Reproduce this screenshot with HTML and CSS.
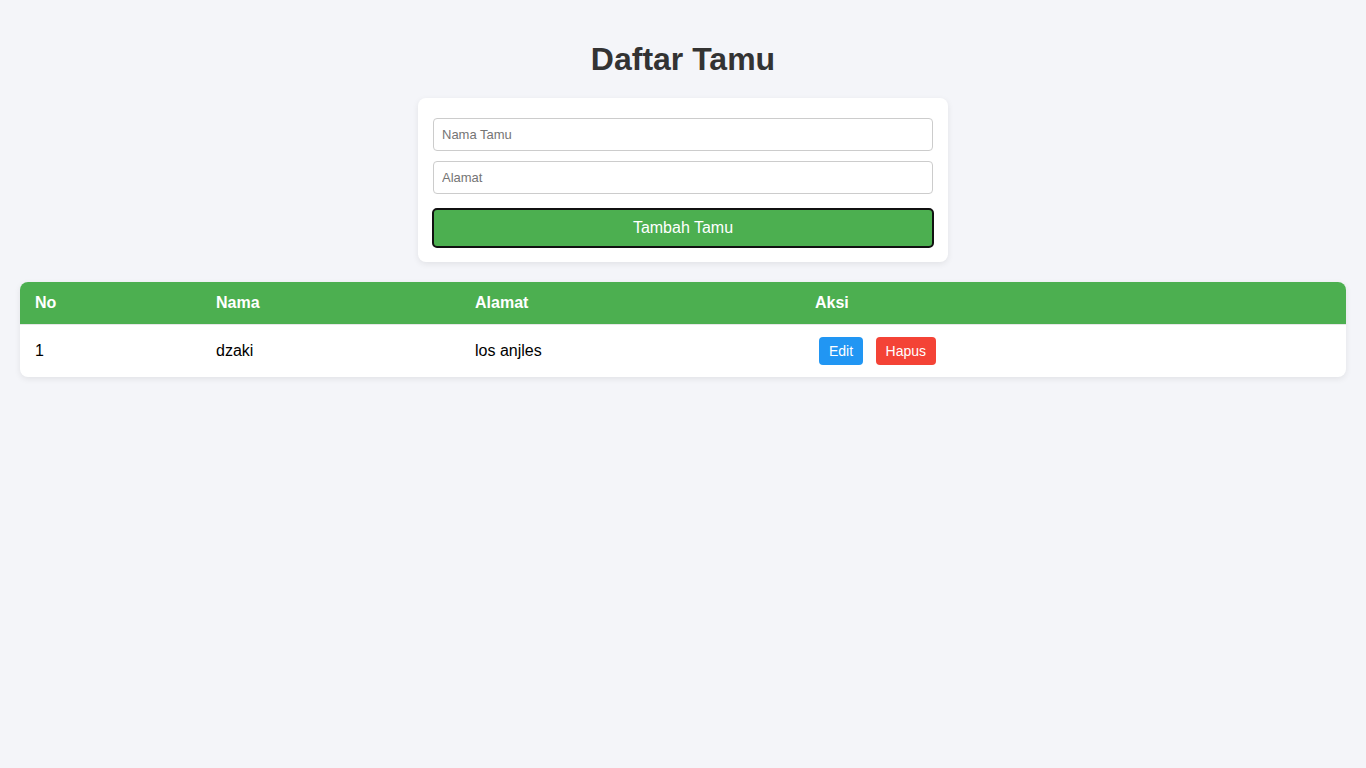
FILE: index.html
```html
<!DOCTYPE html>
<html>

<head>
    <title>Daftar Tamu</title>
    <link rel="stylesheet" href="styles.css">
</head>

<body>

    <h1>Daftar Tamu</h1>

    <form class="guest-form">
        <input type="text" id="nama" name="nama" placeholder="Nama Tamu">
        <input type="text" id="alamat" name="alamat" placeholder="Alamat">
        <button type="submit" class="btn-add">Tambah Tamu</button>
    </form>

    <table class="guest-table">
        <thead>
            <tr>
                <th class="col-no">No</th>
                <th class="col-nama">Nama</th>
                <th class="col-alamat">Alamat</th>
                <th>Aksi</th>
            </tr>
        </thead>
        <tbody>
            <tr>
                <td>1</td>
                <td>dzaki</td>
                <td>los anjles</td>
                <td>
                    <button class="btn-edit">Edit</button>
                    <button class="btn-delete">Hapus</button>
                </td>
            </tr>
        </tbody>
    </table>

</body>

</html>
```

FILE: styles.css
```css
body {
    font-family: "Liberation Sans", Arial, sans-serif;
    background-color: #f4f5f9;
    margin: 0;
    padding: 20px;
}

h1 {
    text-align: center;
    color: #333;
    font-size: 32px;
    margin: 21px 0 20px;
}

.guest-form {
    display: flex;
    flex-direction: column;
    gap: 10px;
    background: #fff;
    max-width: 500px;
    margin: 0 auto 20px;
    padding: 20px 15px 14px;
    border-radius: 8px;
    box-shadow: 0 2px 6px rgba(0, 0, 0, 0.08);
}

.guest-form input {
    width: 100%;
    box-sizing: border-box;
    margin: 0;
    padding: 8px;
    font-family: inherit;
    font-size: 13px;
    border: 1px solid #ccc;
    border-radius: 4px;
}

.guest-form input::placeholder {
    color: #757575;
}

.btn-add {
    width: calc(100% + 2px);
    margin: 4px -1px 0;
    height: 40px;
    box-sizing: border-box;
    background-color: #4caf50;
    color: #fff;
    font-family: inherit;
    font-size: 16px;
    border: 2px solid #111;
    border-radius: 5px;
}

.guest-table {
    width: 100%;
    border-collapse: collapse;
    background: #fff;
    border-radius: 8px;
    overflow: hidden;
    box-shadow: 0 2px 6px rgba(0, 0, 0, 0.08);
}

.guest-table th,
.guest-table td {
    padding: 12px 15px;
    text-align: left;
    font-size: 16px;
}

.guest-table th {
    background-color: #4caf50;
    color: #fff;
}

.guest-table td {
    border-top: 1px solid #e6e6e6;
}

.col-no {
    width: 151px;
}

.col-nama {
    width: 229px;
}

.col-alamat {
    width: 310px;
}

.btn-edit,
.btn-delete {
    border: none;
    color: #fff;
    font-family: inherit;
    font-size: 14px;
    padding: 6px 10px;
    border-radius: 4px;
    margin: 0 4px;
}

.btn-edit {
    background-color: #2196f3;
}

.btn-delete {
    background-color: #f44336;
}
```
